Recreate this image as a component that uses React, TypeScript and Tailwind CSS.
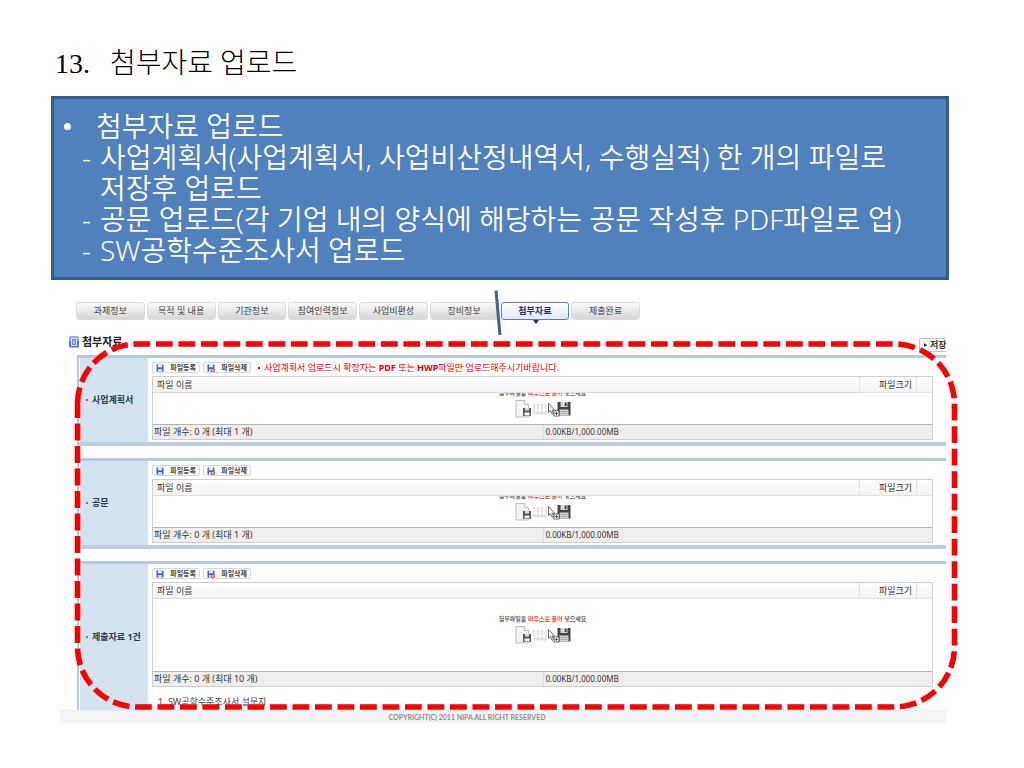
import React from "react";

const tabs = [
  "과제정보",
  "목적 및 내용",
  "기관정보",
  "참여인력정보",
  "사업비편성",
  "장비정보",
  "첨부자료",
  "제출완료",
];

function DocIcon() {
  return (
    <svg viewBox="0 0 11 12" className="h-3 w-[11px] shrink-0" aria-hidden="true">
      <rect x="0" y="0.5" width="10" height="11" rx="1.5" fill="#5a74d8" />
      <rect x="0" y="0.5" width="10" height="5" rx="1.5" fill="#8fa4ee" />
      <rect x="2.5" y="2.5" width="5" height="7" fill="#6f88e6" stroke="#e8edff" strokeWidth="0.9" />
      <path d="M4 5h2M4 7h2" stroke="#fff" strokeWidth="0.8" />
    </svg>
  );
}

function DiskIcon({ remove }: { remove?: boolean }) {
  return (
    <svg viewBox="0 0 8 8" className="h-2 w-2 shrink-0" aria-hidden="true">
      <path d="M0.5 0.5h6.2l0.8 0.8v6.2h-7z" fill="#3f68b8" />
      <rect x="2" y="0.3" width="4" height="3" fill="#e6eefb" />
      <rect x="2" y="5" width="4" height="2.7" fill="#c9d8f2" />
      {remove && (
        <>
          <circle cx="6" cy="6" r="2" fill="#e23b32" />
          <path d="M5 5l2 2M7 5l-2 2" stroke="#fff" strokeWidth="0.6" />
        </>
      )}
    </svg>
  );
}

function DragArt() {
  return (
    <svg viewBox="0 0 56 18" className="h-[18px] w-14 shrink-0" aria-hidden="true">
      <path d="M1 0.5h8.5l4 4v12.5h-12.5z" fill="#f4f4f4" stroke="#b4b4b4" strokeWidth="0.9" />
      <path d="M9.5 0.5v4h4" fill="#fff" stroke="#b4b4b4" strokeWidth="0.8" />
      <rect x="8" y="8" width="8" height="8" fill="#555" />
      <rect x="10" y="8" width="4" height="2.5" fill="#ddd" />
      <rect x="9.5" y="12.5" width="5" height="3" fill="#f5f5f5" />
      <g fill="none" stroke="#bdbdbd" strokeWidth="0.7">
        <path d="M19 4v10l2-2 1.500 3M23 4v10l2-2 1.500 3M27 4v10l2-2 1.500 3M31 4v10" />
        <path d="M19 4l4 5M23 4l4 5M27 4l4 5" strokeDasharray="1 0.8" />
      </g>
      <rect x="42.5" y="2" width="13" height="13.5" fill="#444" />
      <rect x="45.5" y="2" width="7" height="5" fill="#d8d8d8" />
      <rect x="49.8" y="2.7" width="1.7" height="3.3" fill="#333" />
      <rect x="44.5" y="9.5" width="9" height="6" fill="#d4d4d4" />
      <path d="M45.5 11.5h7M45.5 13.5h7" stroke="#999" strokeWidth="0.7" />
      <path
        d="M33.5 3.5v9l2-1.8 1.7 3.6 1.4-0.7-1.6-3.4h2.7z"
        fill="#fff"
        stroke="#444"
        strokeWidth="0.8"
      />
      <rect x="39" y="11" width="5" height="5" fill="#fff" stroke="#444" strokeWidth="0.8" />
      <path d="M41.5 12.2v2.6M40.2 13.5h2.6" stroke="#222" strokeWidth="0.8" />
    </svg>
  );
}

function ToolButton({ label, remove }: { label: string; remove?: boolean }) {
  return (
    <button
      type="button"
      className="flex h-[11px] w-12 items-center justify-between rounded-[2px] border border-[#d8d8d8] bg-[#fbfbfb] px-[3px] text-[7px] leading-[9px] font-bold whitespace-nowrap text-[#444]"
    >
      <DiskIcon remove={remove} />
      {label}
    </button>
  );
}

interface PanelProps {
  label: string;
  max: number;
  required?: boolean;
  notice?: React.ReactNode;
  tall?: boolean;
  children?: React.ReactNode;
}

function UploadPanel({ label, max, required, notice, tall, children }: PanelProps) {
  return (
    <section
      className={`flex border-t-[3px] border-l-2 border-t-[#b8c9dc] border-l-[#b8c9dc] pl-px ${
        tall ? "" : "border-b-4 border-b-[#bfcddf]"
      }`}
    >
      <h3 className="flex w-[68px] shrink-0 items-center gap-1 bg-[#d5e3f0] pl-[6px] text-[9px] font-bold whitespace-nowrap text-[#2b3a4c]">
        <span className={`size-[2px] shrink-0 ${required ? "bg-[#e0424a]" : "bg-[#6c7f96]"}`} />
        {label}
      </h3>
      <div className="min-w-0 flex-1 pt-1 pr-[13px] pb-[2px] pl-1">
        <div className="mb-[3px] flex h-[11px] items-center gap-[3px]">
          <ToolButton label="파일등록" />
          <ToolButton label="파일삭제" remove />
          {notice}
        </div>
        <div className="border border-[#cfcfcf]">
          <table className="w-full table-fixed border-separate border-spacing-0 text-[9px] leading-[15px] text-[#333]">
            <thead>
              <tr className="bg-linear-to-b from-white to-[#f1f1f1]">
                <th className="h-4 border-b border-[#dedede] p-0 pl-1 text-left font-normal">파일 이름</th>
                <th className="w-[57px] border-b border-l border-[#e2e2e2] p-0 pr-1 text-right font-normal">
                  파일크기
                </th>
                <th className="w-4 border-b border-l border-[#e2e2e2] p-0" aria-label="스크롤" />
              </tr>
            </thead>
            <tbody>
              <tr>
                <td colSpan={3} className="p-0">
                  <div
                    className={`flex flex-col items-center justify-center overflow-hidden pb-3 ${
                      tall ? "h-[72px]" : "h-[31px]"
                    }`}
                  >
                    <p className="h-3 shrink-0 text-[6px] leading-[10px] font-bold text-[#666]">
                      첨부파일을 <span className="text-[#f04a1c]">마우스로 끌어</span> 넣으세요
                    </p>
                    <DragArt />
                  </div>
                </td>
              </tr>
            </tbody>
          </table>
          <div className="grid h-[15px] grid-cols-2 border-t border-[#b5b5b5] bg-[#f0eeed] text-[9px] leading-[14px] text-[#333]">
            <span className="pl-px">파일 개수: 0 개 (최대 {max} 개)</span>
            <span className="border-l border-[#dcdcdc] pl-[2px] text-[8px]">0.00KB/1,000.00MB</span>
          </div>
        </div>
        {children}
      </div>
    </section>
  );
}

export default function App() {
  return (
    <main className="min-h-screen bg-white pt-12 pr-[75px] pl-[51px] font-['Noto_Sans','Noto_Sans_CJK_KR',sans-serif]">
      <h1 className="flex h-12 gap-5 pl-1 font-['Liberation_Serif','Noto_Sans_CJK_KR',serif] text-[28px] leading-8 font-light text-black">
        <span>13.</span>
        <span>첨부자료 업로드</span>
      </h1>

      <div className="h-[184px] border-[3px] border-[#385d8a] bg-[#4f81bd] pt-3 text-[28px] leading-[31px] font-[350] text-white">
        <ul>
          <li className="flex items-center pl-[10px]">
            <span className="mr-[25px] size-[7px] rounded-full bg-white" />
            첨부자료 업로드
          </li>
          <li className="flex pl-7">
            <span className="w-[18px] shrink-0">-</span>
            <span>
              사업계획서(사업계획서, 사업비산정내역서, 수행실적) 한 개의 파일로
              <br />
              저장후 업로드
            </span>
          </li>
          <li className="flex pl-7">
            <span className="w-[18px] shrink-0">-</span>
            <span>공문 업로드(각 기업 내의 양식에 해당하는 공문 작성후 PDF파일로 업)</span>
          </li>
          <li className="flex pl-7">
            <span className="w-[18px] shrink-0">-</span>
            <span>SW공학수준조사서 업로드</span>
          </li>
        </ul>
      </div>

      <div className="relative mr-[3px] ml-[9px] pt-[22px]">
        <nav className="ml-4 grid w-[564px] grid-cols-8 gap-[2px]">
          {tabs.map((tab) => {
            const active = tab === "첨부자료";
            return (
              <a
                key={tab}
                href="#"
                aria-current={active ? "page" : undefined}
                className={`relative h-[18px] rounded-[3px] border text-center text-[9px] leading-4 whitespace-nowrap ${
                  active
                    ? "border-[#5f7bb5] bg-linear-to-b from-white to-[#e3e9f5] font-bold text-[#1d2f7c]"
                    : "border-[#dcdcdc] bg-linear-to-b from-[#fafafa] to-[#d6d6d6] text-[#444]"
                }`}
              >
                {tab}
                {active && (
                  <svg viewBox="0 0 6 4" className="absolute top-[17px] left-[31px] h-1 w-[6px]" aria-hidden="true">
                    <path d="M0 0h6l-3 4z" fill="#1f3168" />
                  </svg>
                )}
              </a>
            );
          })}
        </nav>

        <div className="mt-[15px] flex h-5 justify-between pl-[9px]">
          <h2 className="flex h-[14px] items-center gap-[2px] text-[11px] font-bold text-[#222]">
            <DocIcon />
            첨부자료
          </h2>
          <button
            type="button"
            className="mt-[3px] flex h-[14px] w-[27px] items-center gap-[3px] overflow-hidden rounded-l-[2px] border border-r-0 border-[#c4c4c4] bg-[#fcfcfc] pl-1 text-[9px] leading-3 font-bold whitespace-nowrap text-[#333]"
          >
            <svg viewBox="0 0 3 4" className="h-1 w-[3px] shrink-0" aria-hidden="true">
              <path d="M0 0l3 2-3 2z" fill="#222" />
            </svg>
            저장
          </button>
        </div>

        <div className="ml-[17px] flex flex-col gap-3">
          <UploadPanel
            label="사업계획서"
            max={1}
            required
            notice={
              <p className="flex items-center gap-1 pl-1 text-[9px] leading-[11px] whitespace-nowrap text-[#f00000]">
                <span className="size-[2px] bg-[#f00000]" />
                <span>
                  사업계획서 업로드시 확장자는 <b>PDF</b> 또는 <b>HWP</b>파일만 업로드해주시기바랍니다.
                </span>
              </p>
            }
          />
          <UploadPanel label="공문" max={1} />
          <UploadPanel label="제출자료 1건" max={10} tall>
            <p className="mt-2 h-[13px] pl-[6px] text-[9px] leading-[14px] text-[#444]">1. SW공학수준조사서 설문지</p>
          </UploadPanel>
        </div>

        <footer className="h-[13px] border-t border-[#ececec] bg-[#f4f4f4] pr-[72px] text-center font-['Lato',sans-serif] text-[7px] leading-3 font-bold text-[#8c8c8c]">
          COPYRIGHT(C) 2011 NIPA ALL RIGHT RESERVED
        </footer>

        <svg
          viewBox="0 0 886 443"
          preserveAspectRatio="none"
          className="pointer-events-none absolute inset-0 h-full w-full overflow-visible"
          aria-hidden="true"
        >
          <path d="M436 10.5L440 55" stroke="#3f628f" strokeWidth="3" />
          <path
            d="M17.5 124a60 60 0 0 1 60-60H834.5a60 60 0 0 1 60 60V367a60 60 0 0 1-60 60H77.5a60 60 0 0 1-60-60Z"
            fill="none"
            stroke="#f80000"
            strokeWidth="5.6"
            strokeDasharray="16.8 5.7"
          />
        </svg>
      </div>
    </main>
  );
}
